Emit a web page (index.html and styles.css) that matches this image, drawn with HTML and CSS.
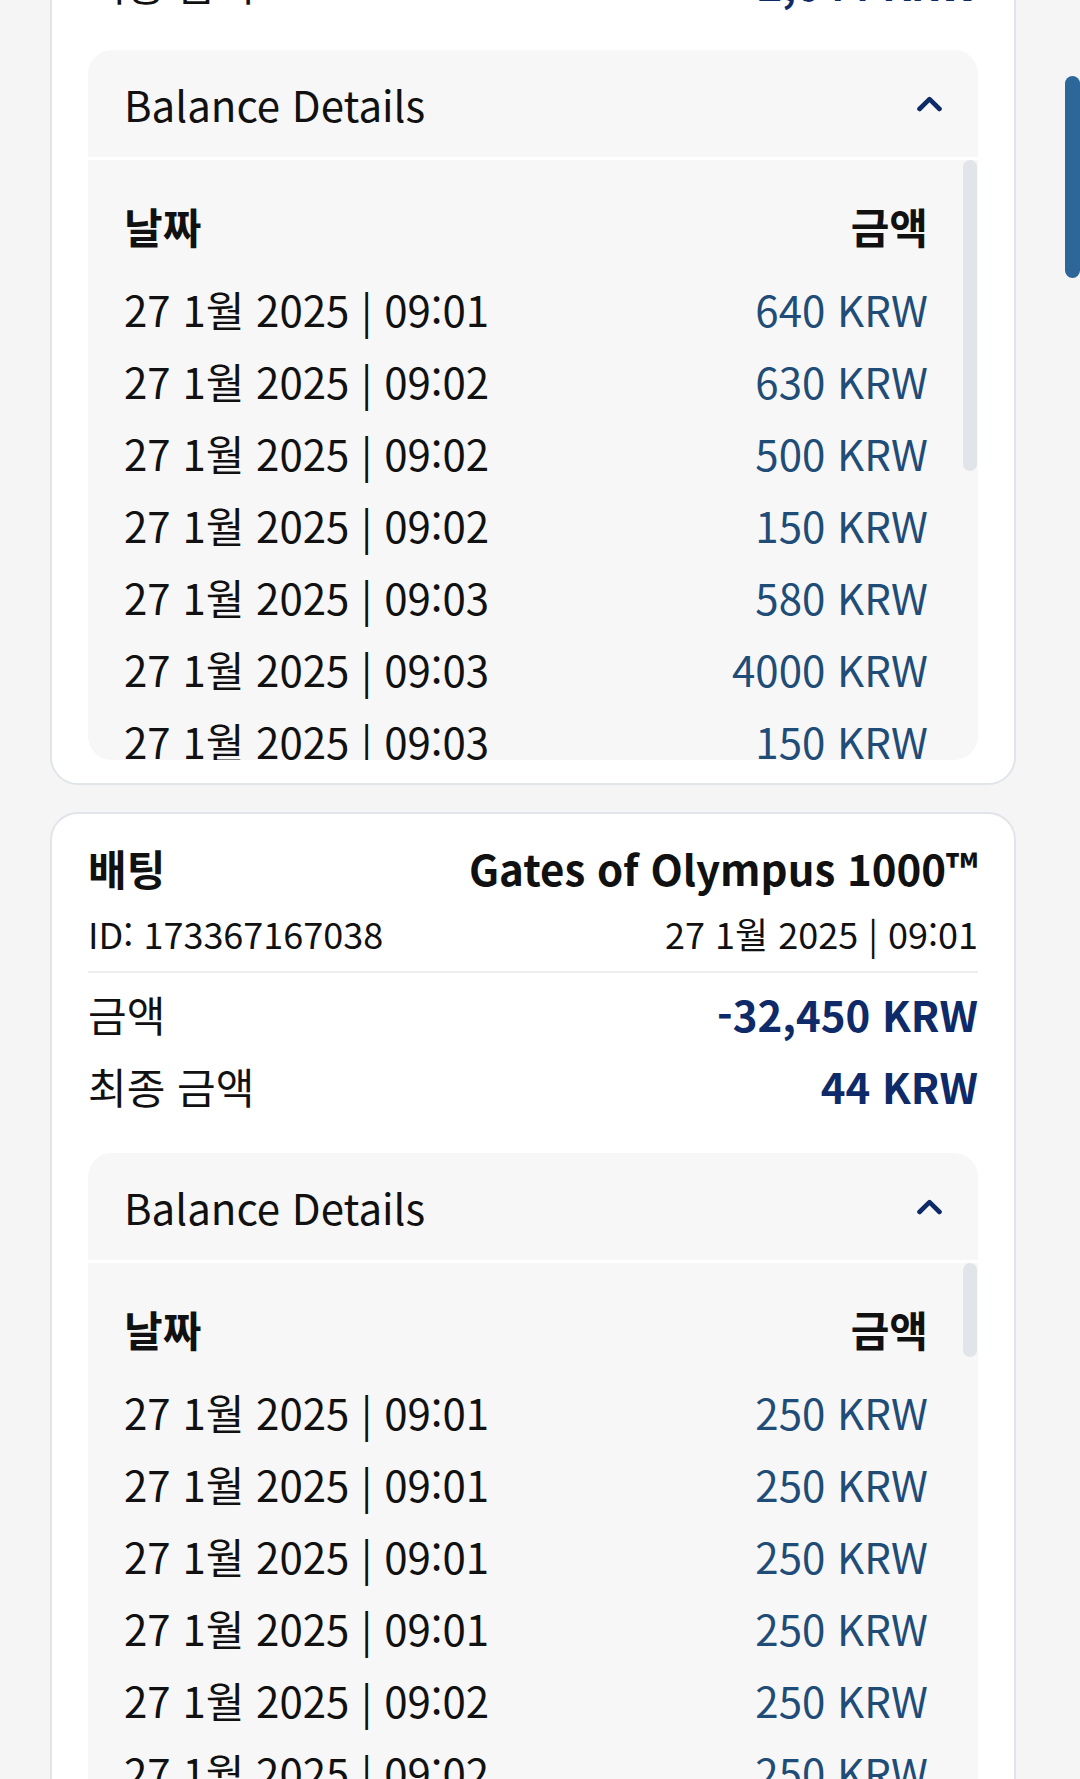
FILE: index.html
```html
<!DOCTYPE html>
<html lang="ko">
<head>
<meta charset="utf-8">
<title>Transactions</title>
<link rel="stylesheet" href="styles.css">
</head>
<body>
<div class="page">
  <section class="card card-first">
    <div class="row title-row"><span>배팅</span><span>Gates of Olympus 1000™</span></div>
    <div class="row meta-row"><span>ID: 173367167012</span><span>27 1월 2025 | 09:00</span></div>
    <div class="divider"></div>
    <div class="row sum-row"><span>금액</span><span class="value">-32,450 KRW</span></div>
    <div class="row sum-row"><span>최종 금액</span><span class="value">2,044 KRW</span></div>
    <div class="box">
      <div class="box-head"><span>Balance Details</span>
        <svg class="chev" width="25" height="16" viewBox="0 0 25 16"><polyline points="2.5,13 12.5,3.2 22.5,13" fill="none" stroke="#0d2b66" stroke-width="4.6" stroke-linecap="round" stroke-linejoin="round"/></svg>
      </div>
      <div class="scroll-wrap">
        <div class="scroll">
          <div class="row list-head"><span>날짜</span><span>금액</span></div>
          <div class="row item"><span>27 1월 2025 | 09:01</span><span class="amt">640 KRW</span></div>
          <div class="row item"><span>27 1월 2025 | 09:02</span><span class="amt">630 KRW</span></div>
          <div class="row item"><span>27 1월 2025 | 09:02</span><span class="amt">500 KRW</span></div>
          <div class="row item"><span>27 1월 2025 | 09:02</span><span class="amt">150 KRW</span></div>
          <div class="row item"><span>27 1월 2025 | 09:03</span><span class="amt">580 KRW</span></div>
          <div class="row item"><span>27 1월 2025 | 09:03</span><span class="amt">4000 KRW</span></div>
          <div class="row item"><span>27 1월 2025 | 09:03</span><span class="amt">150 KRW</span></div>
          <div class="row item"><span>27 1월 2025 | 09:03</span><span class="amt">250 KRW</span></div>
          <div class="row item"><span>27 1월 2025 | 09:04</span><span class="amt">300 KRW</span></div>
          <div class="row item"><span>27 1월 2025 | 09:04</span><span class="amt">150 KRW</span></div>
        </div>
        <div class="thumb" style="height: 311px"></div>
      </div>
    </div>
  </section>

  <section class="card">
    <div class="row title-row"><span>배팅</span><span>Gates of Olympus 1000™</span></div>
    <div class="row meta-row"><span>ID: 173367167038</span><span>27 1월 2025 | 09:01</span></div>
    <div class="divider"></div>
    <div class="row sum-row"><span>금액</span><span class="value">-32,450 KRW</span></div>
    <div class="row sum-row"><span>최종 금액</span><span class="value">44 KRW</span></div>
    <div class="box">
      <div class="box-head"><span>Balance Details</span>
        <svg class="chev" width="25" height="16" viewBox="0 0 25 16"><polyline points="2.5,13 12.5,3.2 22.5,13" fill="none" stroke="#0d2b66" stroke-width="4.6" stroke-linecap="round" stroke-linejoin="round"/></svg>
      </div>
      <div class="scroll-wrap">
        <div class="scroll">
          <div class="row list-head"><span>날짜</span><span>금액</span></div>
          <div class="row item"><span>27 1월 2025 | 09:01</span><span class="amt">250 KRW</span></div>
          <div class="row item"><span>27 1월 2025 | 09:01</span><span class="amt">250 KRW</span></div>
          <div class="row item"><span>27 1월 2025 | 09:01</span><span class="amt">250 KRW</span></div>
          <div class="row item"><span>27 1월 2025 | 09:01</span><span class="amt">250 KRW</span></div>
          <div class="row item"><span>27 1월 2025 | 09:02</span><span class="amt">250 KRW</span></div>
          <div class="row item"><span>27 1월 2025 | 09:02</span><span class="amt">250 KRW</span></div>
          <div class="row item"><span>27 1월 2025 | 09:02</span><span class="amt">250 KRW</span></div>
          <div class="row item"><span>27 1월 2025 | 09:02</span><span class="amt">250 KRW</span></div>
          <div class="row item"><span>27 1월 2025 | 09:02</span><span class="amt">250 KRW</span></div>
          <div class="row item"><span>27 1월 2025 | 09:03</span><span class="amt">250 KRW</span></div>
        </div>
        <div class="thumb" style="height: 94px"></div>
      </div>
    </div>
  </section>
</div>
<div class="page-thumb"></div>
</body>
</html>
```

FILE: styles.css
```css
* { box-sizing: border-box; }

html, body {
  margin: 0;
  padding: 0;
  background: #f5f5f6;
  overflow: hidden;
}

body {
  font-family: "Noto Sans CJK KR", "Noto Sans", sans-serif;
  color: #111111;
  font-size: 42px;
}

.page {
  width: 1066px;
  padding: 0 50px;
  display: flex;
  flex-direction: column;
  gap: 27px;
}

.card-first {
  margin-top: -291px;
}

.card {
  background: #ffffff;
  border: 2px solid #e1e4e8;
  border-radius: 28px;
  padding: 24px 36px 23px;
  display: flex;
  flex-direction: column;
}

.row {
  display: flex;
  justify-content: space-between;
  align-items: baseline;
  white-space: nowrap;
}

.title-row {
  font-weight: 700;
  font-size: 42px;
  line-height: 60px;
}

.meta-row {
  font-size: 36px;
  line-height: 70px;
}

.divider {
  height: 2px;
  background: #eeeeee;
  margin: 3px 0 5px;
}

.sum-row {
  font-size: 42px;
  line-height: 72px;
}

.value {
  font-weight: 700;
  color: #0f2a68;
}

.box {
  margin-top: 31px;
  background: #f7f7f7;
  border-radius: 24px;
  overflow: hidden;
}

.box-head {
  height: 110px;
  border-bottom: 3px solid #ffffff;
  padding: 0 36px 0 36px;
  display: flex;
  align-items: center;
  justify-content: space-between;
  font-size: 42px;
  line-height: 107px;
}

.chev {
  display: block;
}

.scroll-wrap {
  position: relative;
}

.scroll {
  height: 600px;
  overflow: hidden;
  padding: 30px 50px 0 36px;
}

.thumb {
  position: absolute;
  top: 0;
  right: 1px;
  width: 14px;
  background: #e1e4e9;
  border-radius: 7px;
}

.list-head {
  font-weight: 700;
  line-height: 72px;
  margin-bottom: 11px;
}

.item {
  line-height: 72px;
}

.amt {
  color: #1f4d78;
}

.page-thumb {
  position: fixed;
  top: 76px;
  right: 0;
  width: 15px;
  height: 202px;
  background: #2d6699;
  border-radius: 8px;
}
```
